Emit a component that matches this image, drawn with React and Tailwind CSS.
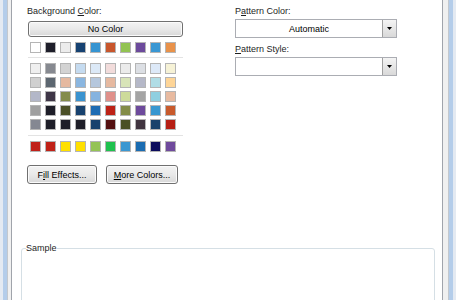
import React from 'react';

const themeRow = ['#ffffff', '#1e1e2a', '#ececec', '#164272', '#3694d1', '#c8562c', '#92c352', '#6c4a9c', '#3a97d3', '#e9924a'];

const shadeRows = [
    ['#efefef', '#868990', '#d3d3d3', '#c5dbf0', '#dce9f7', '#f2dcdb', '#ebebeb', '#dcdfe4', '#dde9f8', '#f6f2d6'],
    ['#d0d0d0', '#5c6670', '#e5b9a0', '#8ab6e0', '#b5c7dd', '#e6b9a0', '#d8e4b8', '#b5b8c8', '#b0dde6', '#fed597'],
    ['#b3b7c8', '#3e3546', '#848c4c', '#3a93d0', '#85b3df', '#e0908a', '#cddb9a', '#a4a4a4', '#8fcfe0', '#e8baa0'],
    ['#a0a0a0', '#1e1e28', '#4b5028', '#17416e', '#1e6cb3', '#bd2216', '#838c48', '#6d4a9c', '#3897d0', '#c85a2c'],
    ['#858892', '#1e1e28', '#1e1e28', '#1e1e28', '#18416d', '#541010', '#4a4f25', '#40343f', '#1a426b', '#b61f14'],
];

const standardRow = ['#c0211a', '#c02218', '#ffe000', '#ffe000', '#94c356', '#1fc14f', '#3b97d1', '#1b6cb1', '#0c0c5c', '#6f4a9c'];

const SwatchRow = ({ colors }) => (
    <div className="flex gap-[4px]">
        {colors.map((c, i) => (
            <div key={i} className="size-[11px] border border-[#b5b5b5]" style={{ backgroundColor: c }} />
        ))}
    </div>
);

const Separator = () => <div className="ml-[1px] h-px w-[155px] bg-[#e3e3e3]" />;

const winButton = "flex items-center justify-center rounded-[3px] border border-[#707070] bg-linear-to-b from-[#f3f3f3] via-[#e9e9e9] to-[#d8d8d8] shadow-[inset_0_0_0_1px_#fbfbfb] text-black";

const Combo = ({ value }) => (
    <div className="flex h-[19px] w-[162px] border border-[#abadb3] bg-white">
        <div className="flex flex-1 items-center justify-center text-black">{value}</div>
        <div className="flex w-[14px] items-center justify-center border-l border-[#a0a0a0] bg-linear-to-b from-[#f4f4f4] to-[#d9d9d9]">
            <svg width="5" height="3" viewBox="0 0 5 3">
                <polygon points="0,0 5,0 2.5,3" fill="#000" />
            </svg>
        </div>
    </div>
);

export default function App() {
    return (
        <div className="flex h-[300px] w-[456px] overflow-hidden font-['Liberation_Sans',Arial,sans-serif] text-[9px] leading-[12px] text-[#1e1e1e]">
            {/* window frame, left */}
            <div className="w-[3px] bg-[#e4eaf2]" />
            <div className="w-[4px] bg-[#b4cdea]" />
            <div className="w-px bg-[#c3c8ce]" />
            <div className="w-[3px] bg-[#f0f0f0]" />
            <div className="w-px bg-[#a0a4ab]" />

            <div className="flex flex-1 flex-col overflow-hidden bg-white">
                <div className="flex pl-[15px] pt-[5px]">
                    {/* background colour */}
                    <div className="flex w-[157px] flex-col">
                        <div>Background <span className="underline underline-offset-[1px]">C</span>olor:</div>
                        <div className={`${winButton} ml-[1px] mt-[4px] h-[16px] w-[155px]`}>No Color</div>
                        <div className="ml-[3px] mt-[5px]"><SwatchRow colors={themeRow} /></div>
                        <div className="mt-[4px]"><Separator /></div>
                        <div className="ml-[3px] mt-[5px] flex flex-col gap-[3px]">
                            {shadeRows.map((row, i) => <SwatchRow key={i} colors={row} />)}
                        </div>
                        <div className="mt-[5px]"><Separator /></div>
                        <div className="ml-[3px] mt-[5px]"><SwatchRow colors={standardRow} /></div>
                        <div className="mt-[13px] flex gap-[9px]">
                            <div className={`${winButton} h-[19px] w-[70px]`}>F<span className="underline underline-offset-[1px]">i</span>ll Effects...</div>
                            <div className={`${winButton} h-[19px] w-[72px]`}><span className="underline underline-offset-[1px]">M</span>ore Colors...</div>
                        </div>
                    </div>

                    {/* pattern */}
                    <div className="ml-[51px] flex w-[162px] flex-col">
                        <div>P<span className="underline underline-offset-[1px]">a</span>ttern Color:</div>
                        <div className="mt-[2px]"><Combo value="Automatic" /></div>
                        <div className="mt-[5px]"><span className="underline underline-offset-[1px]">P</span>attern Style:</div>
                        <div className="mt-[2px]"><Combo value="" /></div>
                    </div>
                </div>

                <fieldset className="ml-[9px] mr-[7px] mt-[58px] h-[90px] shrink-0 rounded-[3px] border border-[#d5dfe5]">
                    <legend className="ml-[4px] px-0 text-[#1e1e1e]">Sample</legend>
                </fieldset>
            </div>

            {/* window frame, right */}
            <div className="w-px bg-[#a0a4ab]" />
            <div className="w-[5px] bg-[#f0f0f0]" />
            <div className="w-px bg-[#c3c8ce]" />
            <div className="w-[4px] bg-[#b4cdea]" />
            <div className="w-[3px] bg-[#e4eaf2]" />
        </div>
    );
}
